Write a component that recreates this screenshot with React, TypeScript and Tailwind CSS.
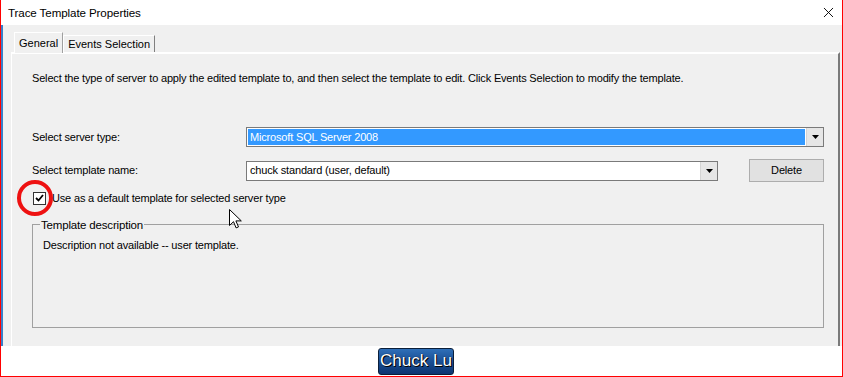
import { X } from 'lucide-react';

const font = { fontFamily: '"Liberation Sans", Arial, sans-serif' };

function Arrow() {
  return (
    <div className="flex h-full w-[17px] items-center justify-center border-l border-[#d4d4d4] bg-[#e6e6e6]">
      <svg width="7" height="4" viewBox="0 0 7 4">
        <path d="M0 0h7L3.5 4z" fill="#000" />
      </svg>
    </div>
  );
}

export default function App() {
  return (
    <div
      className="relative h-[377px] w-[843px] overflow-hidden border-b border-l border-r border-[#ff0000] bg-white text-[11px] tracking-[-0.17px] text-black"
      style={font}
    >
      {/* title bar */}
      <div className="flex h-[25px] items-center justify-between pl-[7px] pr-[5px]">
        <span className="text-[11.6px] tracking-[-0.1px]">Trace Template Properties</span>
        <X className="h-[17px] w-[17px]" strokeWidth={1.3} />
      </div>

      {/* dialog body */}
      <div className="flex h-[321px] bg-[#f0f0f0]">
        <div className="w-[2px] bg-[#3a7fc8]" />
        <div className="ml-[8px] mr-[2px] flex flex-1 flex-col pt-[7px]">
          <div className="flex items-end pl-[3px] tracking-normal">
            <div className="relative z-10 -mb-px flex h-[21px] items-center border-l border-r border-t border-white border-r-[#a0a0a0] bg-[#f0f0f0] px-[4px]">
              General
            </div>
            <div className="flex h-[17px] items-center border-l border-r border-t border-white border-r-[#808080] px-[4px]">
              Events Selection
            </div>
          </div>

          <div className="flex flex-1 flex-col border-l border-r-2 border-t-2 border-l-white border-r-[#7a7a7a] border-t-white pl-[20px] pr-[14px]">
            <p className="mt-[17px] leading-[14px]">
              Select the type of server to apply the edited template to, and then select the template to edit. Click Events Selection to modify the template.
            </p>

            <div className="mt-[42px] flex items-center">
              <span className="w-[214px]">Select server type:</span>
              <div className="flex h-[20px] flex-1 items-center border border-[#7a7a7a] bg-white">
                <div className="mx-px flex h-[16px] flex-1 items-center bg-[#3399ff] pl-[2px] text-white">Microsoft SQL Server 2008</div>
                <Arrow />
              </div>
            </div>

            <div className="mt-[12px] flex items-center">
              <span className="w-[214px]">Select template name:</span>
              <div className="flex h-[20px] w-[472px] items-center border border-[#7a7a7a] bg-white">
                <div className="flex-1 pl-[3px]">chuck standard (user, default)</div>
                <Arrow />
              </div>
              <button className="ml-auto flex h-[23px] w-[75px] items-center justify-center border border-[#adadad] bg-[#e1e1e1]">
                Delete
              </button>
            </div>

            <label className="mt-[8px] flex items-center gap-[6px] pl-[1px]">
              <span className="flex h-[13px] w-[13px] items-center justify-center border border-[#333] bg-white">
                <svg width="9" height="8" viewBox="0 0 9 8">
                  <path d="M1 4l2.5 2.5L8 1" stroke="#000" strokeWidth="1.8" fill="none" />
                </svg>
              </span>
              Use as a default template for selected server type
            </label>

            <fieldset className="mt-[11px] h-[110px] border border-[#a0a0a0] pb-0 pl-[10px] pt-0">
              <legend className="ml-[-3px] px-[1px] text-[11.5px] leading-[14px]">Template description</legend>
              <p className="mt-[5px]">Description not available -- user template.</p>
            </fieldset>
          </div>
        </div>
      </div>

      {/* bottom strip */}
      <div className="flex h-[30px] items-center pl-[377px] tracking-normal">
        <div className="flex h-[27px] w-[76px] items-center justify-center rounded-[3px] border border-[#0b1f3a] bg-gradient-to-b from-[#2f6fb8] via-[#1a4f94] to-[#0c3470] text-[17px] text-white [text-shadow:_0_0_1px_#000,_1px_1px_0_#000]">
          Chuck Lu
        </div>
      </div>

      {/* red highlight circle over the checkbox */}
      <div className="absolute left-[16px] top-[180px] h-[36px] w-[36px] rounded-full border-[4px] border-[#ee1111]" />

      {/* mouse pointer */}
      <svg className="absolute left-[228px] top-[209px]" width="13" height="21" viewBox="0 0 13 21">
        <path d="M0.5 0.5v16l4-3.8 2.6 6.2 2.4-1-2.6-6h5.4z" fill="#fff" stroke="#000" strokeWidth="1" />
      </svg>
    </div>
  );
}
